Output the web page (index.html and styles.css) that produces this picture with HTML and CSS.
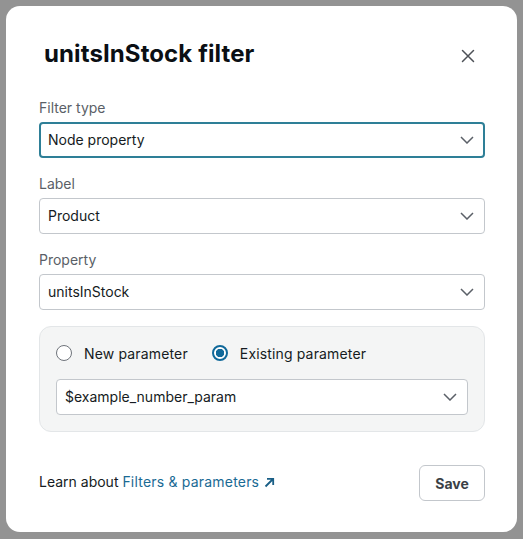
FILE: index.html
```html
<!DOCTYPE html>
<html>
<head>
<meta charset="utf-8">
<link rel="stylesheet" href="styles.css">
</head>
<body>
<div class="dialog">
  <div class="header">
    <h1 class="title">unitsInStock filter</h1>
    <button class="close" aria-label="Close">
      <svg width="14" height="14" viewBox="0 0 14 14"><path d="M1.5 1.5 L12.5 12.5 M12.5 1.5 L1.5 12.5" stroke="#4d5157" stroke-width="1.5" fill="none" stroke-linecap="round"/></svg>
    </button>
  </div>

  <div class="field">
    <div class="label">Filter type</div>
    <div class="select focused">
      <span>Node property</span>
      <svg class="chev" width="14" height="8" viewBox="0 0 14 8"><path d="M1 1 L7 7 L13 1" stroke="#5b6068" stroke-width="1.5" fill="none"/></svg>
    </div>
  </div>

  <div class="field">
    <div class="label">Label</div>
    <div class="select">
      <span>Product</span>
      <svg class="chev" width="14" height="8" viewBox="0 0 14 8"><path d="M1 1 L7 7 L13 1" stroke="#5b6068" stroke-width="1.5" fill="none"/></svg>
    </div>
  </div>

  <div class="field">
    <div class="label">Property</div>
    <div class="select">
      <span>unitsInStock</span>
      <svg class="chev" width="14" height="8" viewBox="0 0 14 8"><path d="M1 1 L7 7 L13 1" stroke="#5b6068" stroke-width="1.5" fill="none"/></svg>
    </div>
  </div>

  <div class="param-box">
    <div class="radios">
      <label class="radio"><span class="dot"></span>New parameter</label>
      <label class="radio checked"><span class="dot"></span>Existing parameter</label>
    </div>
    <div class="select">
      <span>$example_number_param</span>
      <svg class="chev" width="14" height="8" viewBox="0 0 14 8"><path d="M1 1 L7 7 L13 1" stroke="#5b6068" stroke-width="1.5" fill="none"/></svg>
    </div>
  </div>

  <div class="footer">
    <div class="learn">Learn about <a class="link">Filters &amp; parameters<svg class="ext" width="11" height="11" viewBox="0 0 11 11"><path d="M1.5 9.5 L9 2 M3 1.8 H9.2 V8" stroke="#1a5f86" stroke-width="1.8" fill="none"/></svg></a></div>
    <button class="save">Save</button>
  </div>
</div>
</body>
</html>
```

FILE: styles.css
```css
* { box-sizing: border-box; }
html, body { margin: 0; padding: 0; }
body {
  background: #939393;
  width: 523px;
  height: 539px;
  padding: 6px 0 0 6px;
  font-family: "Inter", "Noto Sans", sans-serif;
  color: #151b22;
}
.dialog {
  width: 511px;
  height: 526px;
  background: #fff;
  border-radius: 14px;
  padding: 32px 32px 31px 33px;
  display: flex;
  flex-direction: column;
}
.header {
  display: flex;
  align-items: center;
  justify-content: space-between;
  height: 32px;
  margin-bottom: 28px;
}
.title {
  margin: 0 0 0 5px;
  font-size: 24px;
  font-weight: 700;
  line-height: 34px;
  letter-spacing: 0.1px;
  color: #0b0f14;
}
.close {
  border: none;
  background: none;
  padding: 0;
  width: 14px;
  height: 14px;
  margin-right: 10px;
  margin-top: 4px;
  display: flex;
}
.field { margin-bottom: 16px; }
.label {
  font-size: 14px;
  line-height: 20px;
  color: #5a5f67;
  margin-bottom: 4px;
}
.select {
  height: 36px;
  border: 1px solid #c3c7cc;
  border-radius: 4px;
  display: flex;
  align-items: center;
  justify-content: space-between;
  padding: 0 10px 0 8px;
  font-size: 14px;
  line-height: 18px;
  color: #151b22;
  background: #fff;
}
.select span { margin-top: -1px; }
.select.focused {
  border: 2px solid #2e7f97;
  padding-left: 7px;
  padding-right: 9px;
}
.chev { display: block; }
.param-box {
  background: #f4f5f5;
  border: 1px solid #e3e6e8;
  border-radius: 12px;
  padding: 16px 16px 16px 16px;
}
.radios {
  display: flex;
  gap: 24px;
  height: 20px;
  align-items: center;
  margin-bottom: 16px;
}
.radio {
  display: flex;
  align-items: center;
  font-size: 14px;
  color: #151b22;
  gap: 12px;
  letter-spacing: 0.15px;
}
.dot {
  width: 16px;
  height: 16px;
  border-radius: 50%;
  border: 1.5px solid #6f747b;
  background: #fff;
  display: inline-block;
}
.radio.checked .dot {
  border: 2px solid #10699a;
  background: radial-gradient(circle, #10699a 0 4px, #fff 4.5px);
}
.footer {
  margin-top: auto;
  display: flex;
  align-items: center;
  justify-content: space-between;
}
.learn {
  font-size: 14px;
  line-height: 20px;
  color: #151b22;
  margin-top: -3px;
}
.link {
  color: #1a6a94;
  letter-spacing: 0.2px;
}
.ext { margin-left: 5px; vertical-align: -1px; }
.save {
  width: 66px;
  height: 36px;
  border: 1px solid #c3c7cc;
  border-radius: 6px;
  background: #fff;
  font-family: inherit;
  font-weight: 700;
  font-size: 14px;
  color: #3a3f46;
  margin-right: 0;
}
```
